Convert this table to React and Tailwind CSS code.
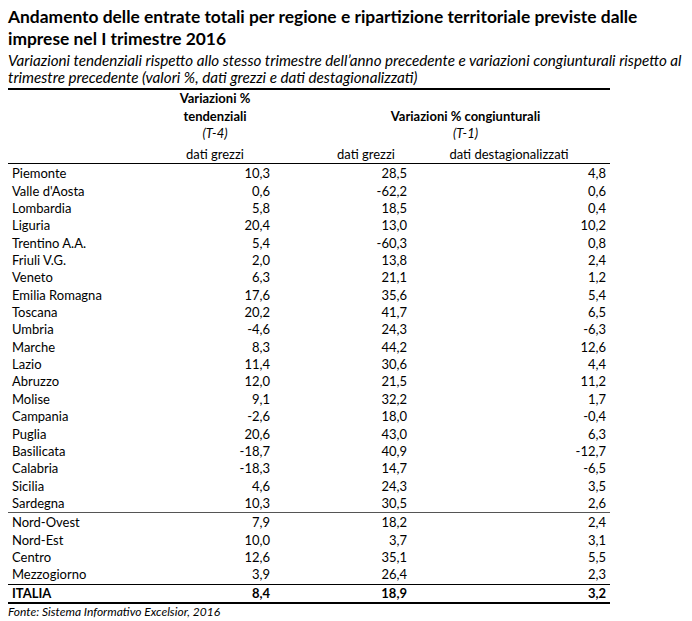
import React from "react";

const regions = [
  ["Piemonte", "10,3", "28,5", "4,8"],
  ["Valle d'Aosta", "0,6", "-62,2", "0,6"],
  ["Lombardia", "5,8", "18,5", "0,4"],
  ["Liguria", "20,4", "13,0", "10,2"],
  ["Trentino A.A.", "5,4", "-60,3", "0,8"],
  ["Friuli V.G.", "2,0", "13,8", "2,4"],
  ["Veneto", "6,3", "21,1", "1,2"],
  ["Emilia Romagna", "17,6", "35,6", "5,4"],
  ["Toscana", "20,2", "41,7", "6,5"],
  ["Umbria", "-4,6", "24,3", "-6,3"],
  ["Marche", "8,3", "44,2", "12,6"],
  ["Lazio", "11,4", "30,6", "4,4"],
  ["Abruzzo", "12,0", "21,5", "11,2"],
  ["Molise", "9,1", "32,2", "1,7"],
  ["Campania", "-2,6", "18,0", "-0,4"],
  ["Puglia", "20,6", "43,0", "6,3"],
  ["Basilicata", "-18,7", "40,9", "-12,7"],
  ["Calabria", "-18,3", "14,7", "-6,5"],
  ["Sicilia", "4,6", "24,3", "3,5"],
  ["Sardegna", "10,3", "30,5", "2,6"],
];

const areas = [
  ["Nord-Ovest", "7,9", "18,2", "2,4"],
  ["Nord-Est", "10,0", "3,7", "3,1"],
  ["Centro", "12,6", "35,1", "5,5"],
  ["Mezzogiorno", "3,9", "26,4", "2,3"],
];

const cols = "grid grid-cols-[152px_110px_55px_82px_5px_194px_4px]";

function Row({ r, bold }) {
  return (
    <div className={`${cols} h-[17.37px] items-center leading-none ${bold ? "font-bold" : ""}`}>
      <div className="pl-[4px]">{r[0]}</div>
      <div className="text-right">{r[1]}</div>
      <div />
      <div className="text-right">{r[2]}</div>
      <div />
      <div className="text-right">{r[3]}</div>
      <div />
    </div>
  );
}

export default function App() {
  return (
    <div
      className="w-[692px] h-[621px] bg-white text-black overflow-hidden"
      style={{ fontFamily: "Lato, 'Noto Sans', sans-serif" }}
    >
      <div className="pl-[8px] pt-[6px]">
        <h1 className="text-[17.4px] font-bold leading-[22px]">
          Andamento delle entrate totali per regione e ripartizione territoriale previste dalle
          <br />
          imprese nel I trimestre 2016
        </h1>
        <p className="italic text-[15.2px] leading-[17px] mt-[2px] whitespace-nowrap">
          Variazioni tendenziali rispetto allo stesso trimestre dell’anno precedente e variazioni congiunturali rispetto al
          <br />
          trimestre precedente (valori %, dati grezzi e dati destagionalizzati)
        </p>
        <div className="w-[602px] text-[13px]">
          <div className="h-[2px] bg-black mt-[2px]" />
          <div className={`${cols} h-[73px]`}>
            <div />
            <div className="flex flex-col items-center font-bold leading-[17.5px] pt-[0px]">
              <span>Variazioni %</span>
              <span>tendenziali</span>
              <span className="italic font-normal">(T-4)</span>
              <span className="font-normal mt-[3px]">dati grezzi</span>
            </div>
            <div />
            <div className="col-span-3 flex flex-col leading-[17.5px]">
              <div className="flex flex-col items-center pt-[17.5px]">
                <span className="font-bold">Variazioni % congiunturali</span>
                <span className="italic">(T-1)</span>
              </div>
              <div className="grid grid-cols-[82px_5px_194px] mt-[3px]">
                <span className="text-center">dati grezzi</span>
                <span />
                <span className="text-center">dati destagionalizzati</span>
              </div>
            </div>
            <div />
          </div>
          <div className="h-[1px] bg-black" />
          <div className="pt-[1px]">
            {regions.map((r) => (
              <Row key={r[0]} r={r} />
            ))}
          </div>
          <div className="h-[1px] bg-[#555]" />
          <div className="pt-[1px]">
            {areas.map((r) => (
              <Row key={r[0]} r={r} />
            ))}
          </div>
          <div className="h-[1px] bg-black" />
          <Row r={["ITALIA", "8,4", "18,9", "3,2"]} bold />
          <div className="h-[2px] bg-black" />
          <p className="italic text-[12px] leading-[14px] mt-[1px]">Fonte: Sistema Informativo Excelsior, 2016</p>
        </div>
      </div>
    </div>
  );
}
